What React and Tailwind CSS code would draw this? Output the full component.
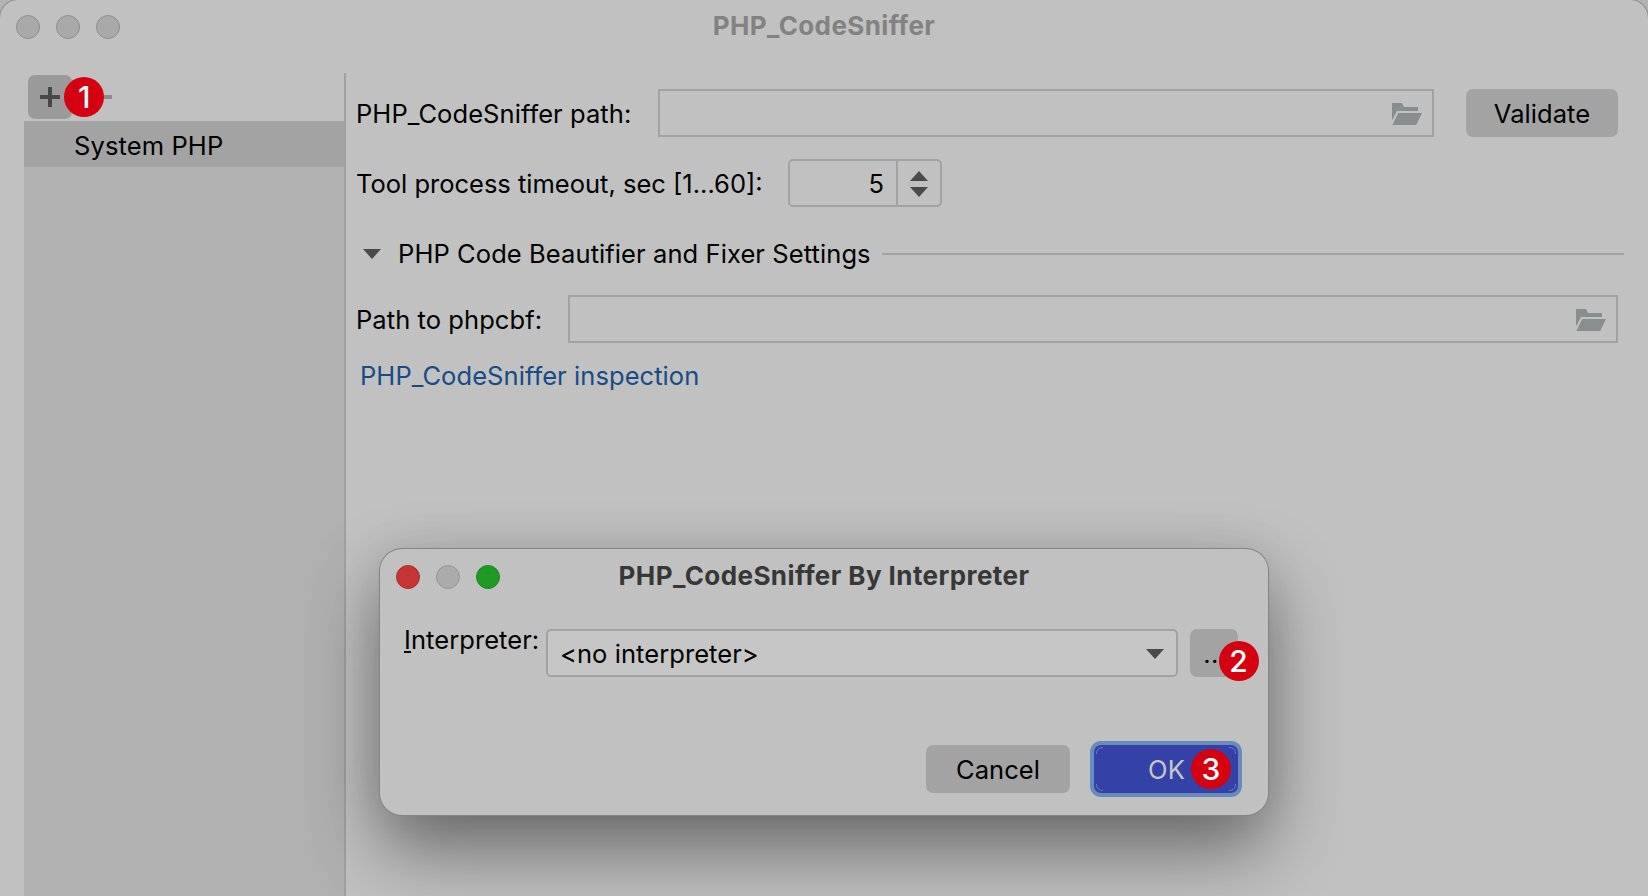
function Dot({ color }) {
  return <span className={`size-6 rounded-full border ${color}`} />;
}

function Badge({ children, place }) {
  return (
    <span className={`absolute flex size-10 items-center justify-center rounded-full bg-[#d50010] text-[30px] leading-none font-medium tracking-normal text-white ${place}`}>
      {children}
    </span>
  );
}

function Folder() {
  return (
    <svg width="30" height="22" viewBox="0 0 30 22" fill="#888d90">
      <path d="M0 0H10L12 4H26V8H5L0 17.5Z" />
      <path d="M6.2 10H30L24.2 22H0.4Z" />
    </svg>
  );
}

function Triangle({ up }) {
  return (
    <svg width="18" height="10" viewBox="0 0 18 10" fill="#4a4a4a">
      <path d={up ? "M9 0L18 10H0Z" : "M0 0H18L9 10Z"} />
    </svg>
  );
}

function Sidebar() {
  return (
    <aside className="flex w-[322px] flex-col border-r-2 border-[#a1a1a1]">
      <div className="relative flex h-12 pt-0.5 pl-1">
        <button className="flex size-11 items-center justify-center rounded-[7px] bg-[#9a9a9a]">
          <svg width="20" height="20" viewBox="0 0 20 20" fill="#484848">
            <path d="M8 0H12V8H20V12H12V20H8V12H0V8H8Z" />
          </svg>
        </button>
        <span className="mt-5 ml-5 h-1 w-5 bg-[#8e8e8e]" />
        <Badge place="top-[3.5px] left-[40.3px]">1</Badge>
      </div>
      <div className="flex h-[46px] items-center bg-[#a3a3a3] pt-[3px] pl-[50px]">
        <span className="tracking-[0.12px]">System PHP</span>
      </div>
      <div className="flex-1 bg-[#b1b1b1]" />
    </aside>
  );
}

function Settings() {
  return (
    <main className="flex flex-1 flex-col pt-4 pl-[10px]">
      <div className="flex h-12 items-center">
        <span className="w-[302px] pt-0.5">PHP_CodeSniffer path:</span>
        <div className="flex h-12 w-[776px] items-center justify-end border-2 border-[#a2a2a2] pt-0.5 pr-[10px]">
          <Folder />
        </div>
        <button className="ml-8 h-12 w-[152px] rounded-[7px] bg-[#a3a3a3] pt-0.5">Validate</button>
      </div>
      <div className="mt-[22px] flex h-12 items-center">
        <span className="w-[432px] pt-0.5 tracking-normal">Tool process timeout, sec [1...60]:</span>
        <div className="flex h-12 w-[154px] rounded-[5px] border-2 border-[#a2a2a2]">
          <span className="flex flex-1 items-center justify-end pt-0.5 pr-3">5</span>
          <span className="flex w-[44px] flex-col items-center justify-center gap-[6px] border-l-2 border-[#a2a2a2] pt-0.5">
            <Triangle up />
            <Triangle />
          </span>
        </div>
      </div>
      <div className="mt-6 flex h-[46px] items-center pl-[7px]">
        <Triangle />
        <span className="ml-[17px] w-[484px] tracking-[0.09px]">PHP Code Beautifier and Fixer Settings</span>
        <span className="h-0.5 w-[742px] bg-[#a2a2a2]" />
      </div>
      <div className="mt-[18px] flex h-12 items-center">
        <span className="w-[212px] pt-0.5">Path to phpcbf:</span>
        <div className="flex h-12 w-[1050px] items-center justify-end border-2 border-[#a2a2a2] pt-0.5 pr-[10px]">
          <Folder />
        </div>
      </div>
      <a className="mt-[13px] flex h-10 items-center pl-1 text-[#184a86]">PHP_CodeSniffer inspection</a>
    </main>
  );
}

function Dialog() {
  return (
    <section className="absolute top-[549px] left-[380px] flex h-[266px] w-[888px] flex-col rounded-[22px] bg-[#c1c1c1] shadow-[0_0_0_1px_#858585,0_34px_76px_0px_rgba(0,0,0,0.46),0_0_50px_rgba(0,0,0,0.06)]">
      <header className="relative flex h-14 items-center gap-4 pl-4">
        <Dot color="border-[#b02c2c] bg-[#c63535]" />
        <Dot color="border-[#969696] bg-[#ababab]" />
        <Dot color="border-[#1b8820] bg-[#209926]" />
        <h2 className="absolute inset-x-0 top-[14px] text-center text-[26px] font-bold tracking-[0.42px] text-[#373737]">PHP_CodeSniffer By Interpreter</h2>
      </header>
      <div className="relative mt-6 flex h-12 pl-6">
        <span className="w-[142px] leading-[22px]">
          <span className="underline decoration-2 underline-offset-2">I</span>nterpreter:
        </span>
        <div className="flex h-12 w-[632px] items-center justify-between rounded-[5px] border-2 border-[#a2a2a2] bg-[#c6c6c6] pt-0.5 pr-3 pl-3">
          <span>&lt;no interpreter&gt;</span>
          <Triangle />
        </div>
        <button className="ml-3 h-12 w-12 rounded-[7px] bg-[#a3a3a3] pt-0.5 pl-0.5 tracking-[0.5px]">...</button>
        <Badge place="top-3 left-[838.5px]">2</Badge>
      </div>
      <footer className="relative mt-[68px] flex justify-end pr-[30px]">
        <button className="h-12 w-36 rounded-[7px] bg-[#a3a3a3] pt-0.5">Cancel</button>
        <button className="relative ml-6 h-12 w-36 rounded-[7px] bg-[#3442a8] pt-0.5 pl-px text-[#c6c6c8] ring-4 ring-[#678bbd]">
          OK
          <svg className="absolute inset-0" width="144" height="48" fill="none" stroke="#6c78c0">
            <path d="M2.5 9Q2.5 2.5 9 2.5M135 2.5Q141.500 2.5 141.500 9M141.500 39Q141.500 45.500 135 45.500M9 45.500Q2.500 45.500 2.500 39" />
          </svg>
        </button>
        <Badge place="top-[3.5px] left-[811px]">3</Badge>
      </footer>
    </section>
  );
}

export default function App() {
  return (
    <div className="h-[896px] w-[1648px] overflow-hidden bg-[#b3b3b3] font-['Inter',sans-serif] text-[25.5px] leading-none tracking-[0.07px] whitespace-nowrap text-black">
      <div className="relative flex h-full flex-col overflow-hidden rounded-t-[18px] bg-[#c1c1c1] shadow-[0_0_0_1px_#8c8c8c]">
        <header className="relative flex h-[73px] items-start gap-4 pt-[15px] pl-4">
          <Dot color="border-[#8e8e8e] bg-[#a9a9a9]" />
          <Dot color="border-[#8e8e8e] bg-[#a9a9a9]" />
          <Dot color="border-[#8e8e8e] bg-[#a9a9a9]" />
          <h1 className="absolute inset-x-0 top-[13px] text-center text-[26px] font-bold tracking-[0.38px] text-[#828282]">PHP_CodeSniffer</h1>
        </header>
        <div className="flex flex-1 pl-6">
          <Sidebar />
          <Settings />
        </div>
        <Dialog />
      </div>
    </div>
  );
}
